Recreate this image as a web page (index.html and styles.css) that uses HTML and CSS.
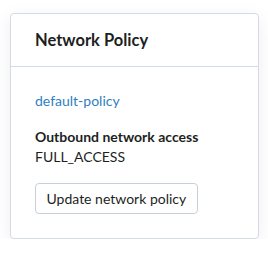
FILE: index.html
```html
<!DOCTYPE html>
<html lang="en">
<head>
<meta charset="utf-8">
<title>Network Policy</title>
<link rel="stylesheet" href="styles.css">
</head>
<body>
  <section class="card">
    <header class="card-header">
      <h2 class="card-title">Network Policy</h2>
    </header>
    <div class="card-body">
      <a class="policy-link" href="#">default-policy</a>
      <div class="field">
        <div class="field-label">Outbound network access</div>
        <div class="field-value">FULL_ACCESS</div>
      </div>
      <button class="btn" type="button">Update network policy</button>
    </div>
  </section>
</body>
</html>
```

FILE: styles.css
```css
html, body {
  margin: 0;
  padding: 0;
  background: #ffffff;
}
body {
  padding: 13px 9px 0 10px;
  font-family: Lato, "Liberation Sans", Arial, sans-serif;
  color: #1d1f23;
}
.card {
  width: 249px;
  box-sizing: border-box;
  background: #ffffff;
  border: 1px solid #d3dbe3;
  border-radius: 4px;
  box-shadow: 0 4px 18px rgba(0, 0, 0, 0.07);
}
.card-header {
  padding: 16px 24px;
  border-bottom: 1px solid #d3dbe3;
}
.card-title {
  margin: 0;
  font-size: 16.5px;
  line-height: 20px;
  font-weight: 700;
  color: #1d1f23;
}
.card-body {
  padding: 24px 24px 24px;
  display: flex;
  flex-direction: column;
  align-items: flex-start;
}
.policy-link {
  font-size: 14px;
  line-height: 20px;
  color: #2f7fc1;
  text-decoration: none;
}
.field {
  margin-top: 16px;
  font-size: 14px;
  line-height: 20px;
}
.field-label {
  font-weight: 700;
}
.btn {
  margin-top: 16px;
  height: 31px;
  padding: 0 10.5px;
  font-family: inherit;
  font-size: 14px;
  color: #1d1f23;
  background: #ffffff;
  border: 1px solid #c5d0da;
  border-radius: 4px;
}
```
